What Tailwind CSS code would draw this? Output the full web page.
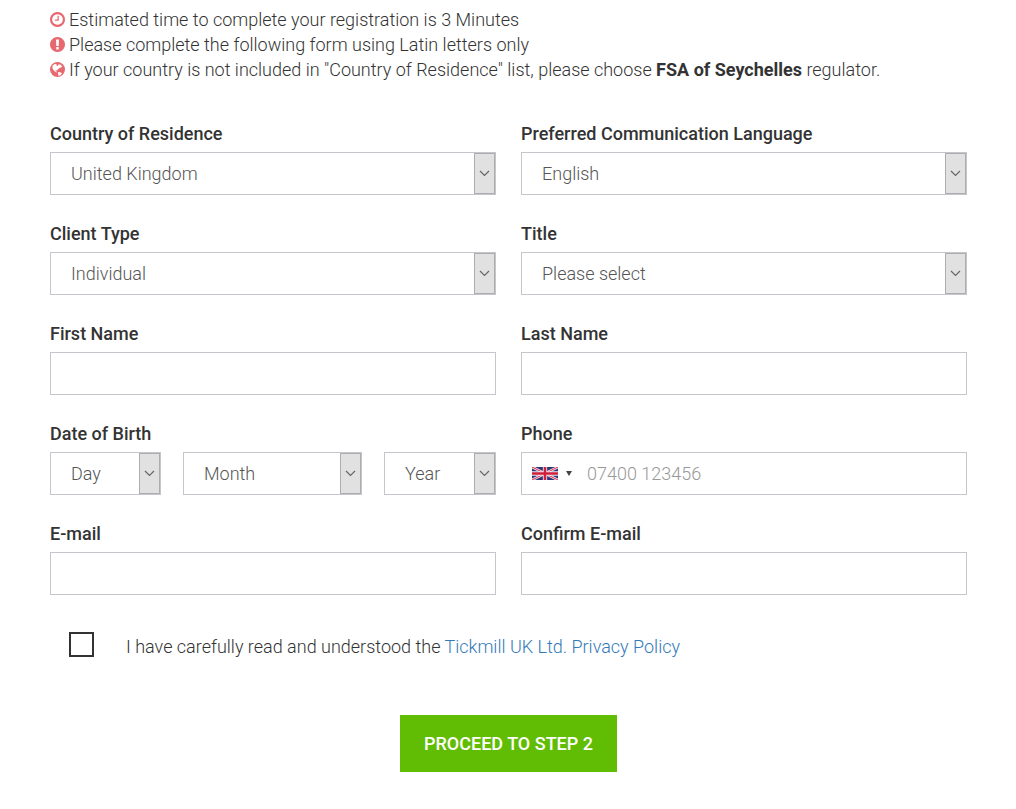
<!DOCTYPE html>
<html lang="en">
<head>
<meta charset="utf-8">
<meta name="viewport" content="width=device-width, initial-scale=1">
<title>Registration</title>
<script src="https://cdn.jsdelivr.net/npm/@tailwindcss/browser@4"></script>
</head>
<body class="bg-white font-[Roboto,sans-serif] text-lg leading-[25px] font-light text-[#333]">
<svg class="hidden" aria-hidden="true">
  <symbol id="chevron" viewBox="0 0 11 7"><path d="M1 1l4.5 4.5L10 1" fill="none" stroke="#666" stroke-width="1.2"/></symbol>
</svg>
<form class="pt-[7px] pr-[49px] pb-9 pl-[50px]">
  <ul>
    <li class="flex items-center gap-1">
      <svg class="size-[15px] shrink-0 fill-[#e8686f]" viewBox="128 128 1536 1536" aria-hidden="true"><path d="M1024 544v448q0 14-9 23t-23 9h-320q-14 0-23-9t-9-23v-64q0-14 9-23t23-9h224v-352q0-14 9-23t23-9h64q14 0 23 9t9 23zm416 352q0-148-73-273t-198-198-273-73-273 73-198 198-73 273 73 273 198 198 273 73 273-73 198-198 73-273zm224 0q0 209-103 385.5t-279.5 279.5-385.5 103-385.5-103-279.5-279.5-103-385.5 103-385.5 279.5-279.5 385.5-103 385.5 103 279.5 279.5 103 385.5z"/></svg>
      <span>Estimated time to complete your registration is 3 Minutes</span>
    </li>
    <li class="flex items-center gap-1">
      <svg class="size-[15px] shrink-0 fill-[#e8686f]" viewBox="128 128 1536 1536" aria-hidden="true"><path d="M896 128q209 0 385.5 103t279.5 279.5 103 385.5-103 385.5-279.5 279.5-385.5 103-385.5-103-279.5-279.5-103-385.5 103-385.5 279.5-279.5 385.5-103zm128 1247v-190q0-14-9-23.5t-22-9.5h-192q-13 0-23 10t-10 23v190q0 13 10 23t23 10h192q13 0 22-9.5t9-23.5zm-2-344l18-621q0-12-10-18-10-8-24-8h-220q-14 0-24 8-10 6-10 18l17 621q0 10 10 17.5t24 7.5h185q14 0 23.5-7.5t10.5-17.5z"/></svg>
      <span>Please complete the following form using Latin letters only</span>
    </li>
    <li class="flex items-center gap-1">
      <svg class="size-[15px] shrink-0" viewBox="0 0 15 15" aria-hidden="true"><circle cx="7.5" cy="7.5" r="7.5" fill="#e8686f"/><path d="M2.6 3.4L4.8 2 6.6 2.2 6.4 3.4 7.8 4 8.4 2.4 10.4 2.6 12 4.2 11.4 5.4 9.8 5.8 8 7.2 7 8.4 5.6 8.2 5.6 9.2 6.6 9.4 7 10.6 5.4 10 3.4 8 2.4 6zM7.8 10.6L9.2 10 11.2 10.8 12 11.6 10.2 13.4 8.2 13.8 8.4 12.4z" fill="#fff"/></svg>
      <span>If your country is not included in "Country of Residence" list, please choose <strong class="font-bold">FSA of Seychelles</strong> regulator.</span>
    </li>
  </ul>

  <div class="mt-[39px] grid grid-cols-2 gap-x-[25px] gap-y-[26px]">
    <div class="flex flex-col gap-1.5">
      <label for="country" class="font-medium">Country of Residence</label>
      <div class="relative">
        <select id="country" class="block h-[43px] w-full appearance-none border border-[#c4c6cc] bg-white pl-5 pr-6 text-[#555]"><option>United Kingdom</option></select>
        <span class="pointer-events-none absolute inset-y-px right-px flex w-[21px] items-center justify-center border border-[#adadb0] bg-[#e1e1e1]"><svg class="h-[7px] w-[11px]"><use href="#chevron"/></svg></span>
      </div>
    </div>
    <div class="flex flex-col gap-1.5">
      <label for="language" class="font-medium">Preferred Communication Language</label>
      <div class="relative">
        <select id="language" class="block h-[43px] w-full appearance-none border border-[#c4c6cc] bg-white pl-5 pr-6 text-[#555]"><option>English</option></select>
        <span class="pointer-events-none absolute inset-y-px right-px flex w-[21px] items-center justify-center border border-[#adadb0] bg-[#e1e1e1]"><svg class="h-[7px] w-[11px]"><use href="#chevron"/></svg></span>
      </div>
    </div>
    <div class="flex flex-col gap-1.5">
      <label for="client" class="font-medium">Client Type</label>
      <div class="relative">
        <select id="client" class="block h-[43px] w-full appearance-none border border-[#c4c6cc] bg-white pl-5 pr-6 text-[#555]"><option>Individual</option></select>
        <span class="pointer-events-none absolute inset-y-px right-px flex w-[21px] items-center justify-center border border-[#adadb0] bg-[#e1e1e1]"><svg class="h-[7px] w-[11px]"><use href="#chevron"/></svg></span>
      </div>
    </div>
    <div class="flex flex-col gap-1.5">
      <label for="title" class="font-medium">Title</label>
      <div class="relative">
        <select id="title" class="block h-[43px] w-full appearance-none border border-[#c4c6cc] bg-white pl-5 pr-6 text-[#555]"><option>Please select</option></select>
        <span class="pointer-events-none absolute inset-y-px right-px flex w-[21px] items-center justify-center border border-[#adadb0] bg-[#e1e1e1]"><svg class="h-[7px] w-[11px]"><use href="#chevron"/></svg></span>
      </div>
    </div>
    <div class="flex flex-col gap-1.5">
      <label for="first" class="font-medium">First Name</label>
      <input id="first" type="text" class="h-[43px] w-full border border-[#c4c6cc] px-5 text-[#555]">
    </div>
    <div class="flex flex-col gap-1.5">
      <label for="last" class="font-medium">Last Name</label>
      <input id="last" type="text" class="h-[43px] w-full border border-[#c4c6cc] px-5 text-[#555]">
    </div>
    <div class="flex flex-col gap-1.5">
      <label for="day" class="font-medium">Date of Birth</label>
      <div class="grid grid-cols-[111fr_179fr_112fr] gap-[22px]">
        <div class="relative">
          <select id="day" class="block h-[43px] w-full appearance-none border border-[#c4c6cc] bg-white pl-5 pr-6 text-[#555]"><option>Day</option></select>
          <span class="pointer-events-none absolute inset-y-px right-px flex w-[21px] items-center justify-center border border-[#adadb0] bg-[#e1e1e1]"><svg class="h-[7px] w-[11px]"><use href="#chevron"/></svg></span>
        </div>
        <div class="relative">
          <select aria-label="Month" class="block h-[43px] w-full appearance-none border border-[#c4c6cc] bg-white pl-5 pr-6 text-[#555]"><option>Month</option></select>
          <span class="pointer-events-none absolute inset-y-px right-px flex w-[21px] items-center justify-center border border-[#adadb0] bg-[#e1e1e1]"><svg class="h-[7px] w-[11px]"><use href="#chevron"/></svg></span>
        </div>
        <div class="relative">
          <select aria-label="Year" class="block h-[43px] w-full appearance-none border border-[#c4c6cc] bg-white pl-5 pr-6 text-[#555]"><option>Year</option></select>
          <span class="pointer-events-none absolute inset-y-px right-px flex w-[21px] items-center justify-center border border-[#adadb0] bg-[#e1e1e1]"><svg class="h-[7px] w-[11px]"><use href="#chevron"/></svg></span>
        </div>
      </div>
    </div>
    <div class="flex flex-col gap-1.5">
      <label for="phone" class="font-medium">Phone</label>
      <div class="flex h-[43px] border border-[#c4c6cc]">
        <button type="button" aria-label="Phone country: United Kingdom" class="flex items-center gap-2 pl-2.5">
          <svg class="h-[13px] w-[26px]" viewBox="0 0 60 30" preserveAspectRatio="none"><path fill="#2b3675" d="M0 0h60v30H0z"/><path d="M0 0l60 30M60 0L0 30" stroke="#f3e6ee" stroke-width="6"/><path d="M0 0l60 30M60 0L0 30" stroke="#d93a55" stroke-width="2.4"/><path d="M30 0v30M0 15h60" stroke="#f3e6ee" stroke-width="10"/><path d="M30 0v30M0 15h60" stroke="#d0213c" stroke-width="6"/></svg>
          <svg class="h-[5px] w-1.5" viewBox="0 0 6 5"><path d="M0 0h6L3 5z" fill="#444"/></svg>
        </button>
        <input id="phone" type="tel" placeholder="07400 123456" class="min-w-0 flex-1 pl-[15px] text-[#555] placeholder:text-[#999]">
      </div>
    </div>
    <div class="flex flex-col gap-1.5">
      <label for="email" class="font-medium">E-mail</label>
      <input id="email" type="email" class="h-[43px] w-full border border-[#c4c6cc] px-5 text-[#555]">
    </div>
    <div class="flex flex-col gap-1.5">
      <label for="confirm" class="font-medium">Confirm E-mail</label>
      <input id="confirm" type="email" class="h-[43px] w-full border border-[#c4c6cc] px-5 text-[#555]">
    </div>
  </div>

  <div class="mt-[35px] flex items-center gap-8 pl-[19px]">
    <input id="agree" type="checkbox" class="size-[25px] shrink-0 appearance-none border-2 border-[#333] checked:bg-[#333]">
    <label for="agree" class="pt-1">I have carefully read and understood the <a href="#" class="text-[#337ab7]">Tickmill UK Ltd. Privacy Policy</a></label>
  </div>
  <div class="mt-14 flex justify-center">
    <button type="submit" class="h-[57px] bg-[#61bd04] px-6 font-medium text-white">PROCEED TO STEP 2</button>
  </div>
</form>
</body>
</html>
